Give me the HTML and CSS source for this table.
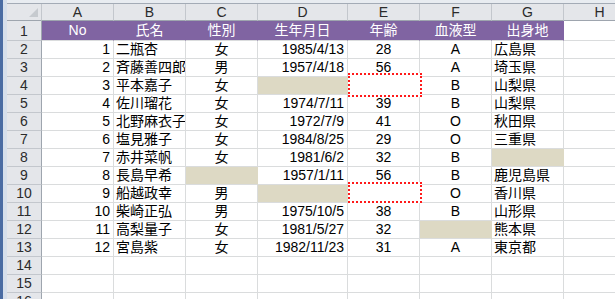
FILE: index.html
```html
<!DOCTYPE html>
<html lang="ja">
<head>
<meta charset="utf-8">
<link rel="stylesheet" href="styles.css">
</head>
<body>
<div class="window">
  <div class="side"><div class="side-dark"></div><div class="side-light"></div></div>
  <div class="main">
    <div class="topstrip"></div>
    <div class="sheet">
      <div class="grid">
        <div class="ch corner"><span class="tri"></span></div>
        <div class="ch">A</div><div class="ch">B</div><div class="ch">C</div><div class="ch">D</div><div class="ch">E</div><div class="ch">F</div><div class="ch">G</div><div class="ch">H</div>

        <div class="rh r1">1</div>
        <div class="c hd r1">No</div><div class="c hd r1">氏名</div><div class="c hd r1">性別</div><div class="c hd r1">生年月日</div><div class="c hd r1">年齢</div><div class="c hd r1">血液型</div><div class="c hd r1">出身地</div><div class="c r1"></div>

        <div class="rh">2</div>
        <div class="c num">1</div><div class="c txt">二瓶杏</div><div class="c ctr">女</div><div class="c num">1985/4/13</div><div class="c ctr">28</div><div class="c ctr">A</div><div class="c txt">広島県</div><div class="c"></div>

        <div class="rh">3</div>
        <div class="c num">2</div><div class="c txt">斉藤善四郎</div><div class="c ctr">男</div><div class="c num">1957/4/18</div><div class="c ctr">56</div><div class="c ctr">A</div><div class="c txt">埼玉県</div><div class="c"></div>

        <div class="rh">4</div>
        <div class="c num">3</div><div class="c txt">平本嘉子</div><div class="c ctr">女</div><div class="c tan"></div><div class="c ctr"></div><div class="c ctr">B</div><div class="c txt">山梨県</div><div class="c"></div>

        <div class="rh">5</div>
        <div class="c num">4</div><div class="c txt">佐川瑠花</div><div class="c ctr">女</div><div class="c num">1974/7/11</div><div class="c ctr">39</div><div class="c ctr">B</div><div class="c txt">山梨県</div><div class="c"></div>

        <div class="rh">6</div>
        <div class="c num">5</div><div class="c txt">北野麻衣子</div><div class="c ctr">女</div><div class="c num">1972/7/9</div><div class="c ctr">41</div><div class="c ctr">O</div><div class="c txt">秋田県</div><div class="c"></div>

        <div class="rh">7</div>
        <div class="c num">6</div><div class="c txt">塩見雅子</div><div class="c ctr">女</div><div class="c num">1984/8/25</div><div class="c ctr">29</div><div class="c ctr">O</div><div class="c txt">三重県</div><div class="c"></div>

        <div class="rh">8</div>
        <div class="c num">7</div><div class="c txt">赤井菜帆</div><div class="c ctr">女</div><div class="c num">1981/6/2</div><div class="c ctr">32</div><div class="c ctr">B</div><div class="c tan"></div><div class="c"></div>

        <div class="rh">9</div>
        <div class="c num">8</div><div class="c txt">長島早希</div><div class="c tan"></div><div class="c num">1957/1/11</div><div class="c ctr">56</div><div class="c ctr">B</div><div class="c txt">鹿児島県</div><div class="c"></div>

        <div class="rh">10</div>
        <div class="c num">9</div><div class="c txt">船越政幸</div><div class="c ctr">男</div><div class="c tan"></div><div class="c ctr"></div><div class="c ctr">O</div><div class="c txt">香川県</div><div class="c"></div>

        <div class="rh">11</div>
        <div class="c num">10</div><div class="c txt">柴崎正弘</div><div class="c ctr">男</div><div class="c num">1975/10/5</div><div class="c ctr">38</div><div class="c ctr">B</div><div class="c txt">山形県</div><div class="c"></div>

        <div class="rh">12</div>
        <div class="c num">11</div><div class="c txt">高梨量子</div><div class="c ctr">女</div><div class="c num">1981/5/27</div><div class="c ctr">32</div><div class="c tan"></div><div class="c txt">熊本県</div><div class="c"></div>

        <div class="rh">13</div>
        <div class="c num">12</div><div class="c txt">宮島紫</div><div class="c ctr">女</div><div class="c num">1982/11/23</div><div class="c ctr">31</div><div class="c ctr">A</div><div class="c txt">東京都</div><div class="c"></div>

        <div class="rh">14</div>
        <div class="c"></div><div class="c"></div><div class="c"></div><div class="c"></div><div class="c"></div><div class="c"></div><div class="c"></div><div class="c"></div>

        <div class="rh">15</div>
        <div class="c"></div><div class="c"></div><div class="c"></div><div class="c"></div><div class="c"></div><div class="c"></div><div class="c"></div><div class="c"></div>

        <div class="rh">16</div>
        <div class="c"></div><div class="c"></div><div class="c"></div><div class="c"></div><div class="c"></div><div class="c"></div><div class="c"></div><div class="c"></div>
      </div>
      <div class="mark mark-e4"></div>
      <div class="mark mark-e10"></div>
    </div>
  </div>
</div>
</body>
</html>
```

FILE: styles.css
```css
html, body {
  margin: 0;
  padding: 0;
  background: #ffffff;
}

.window {
  width: 615px;
  height: 299px;
  overflow: hidden;
  display: flex;
  font-family: "Liberation Sans", "Noto Sans CJK JP", sans-serif;
  font-size: 14px;
  color: #000;
}

.side {
  display: flex;
  flex: 0 0 7px;
}
.side-dark {
  width: 3px;
  background: #4a6ca3;
}
.side-light {
  width: 4px;
  background: #d6dfeb;
}

.main {
  flex: 1;
  display: flex;
  flex-direction: column;
  min-width: 0;
}

.topstrip {
  height: 3px;
  flex: 0 0 3px;
  background: #e8ecf1;
  border-bottom: 1px solid #a3abb6;
}

.sheet {
  position: relative;
  flex: 1;
}

.grid {
  display: grid;
  grid-template-columns: 35px 72px 72px 72px 90px 72px 72px 72px 72px;
  grid-template-rows: 17px 20px repeat(15, 18px);
}

.grid > div {
  box-sizing: border-box;
  border-right: 1px solid #dadcdd;
  border-bottom: 1px solid #dadcdd;
  overflow: hidden;
  white-space: nowrap;
}

.ch {
  background: #e4e6ea;
  border-right-color: #c3c7cd !important;
  border-bottom-color: #9ea5ae !important;
  color: #2b2b2b;
  display: flex;
  align-items: center;
  justify-content: center;
  font-size: 14px;
  line-height: 16px;
}

.corner {
  position: relative;
}
.tri {
  position: absolute;
  right: 3px;
  bottom: 3px;
  width: 0;
  height: 0;
  border-left: 9px solid transparent;
  border-bottom: 9px solid #c6cacf;
}

.rh {
  background: #e4e6ea;
  border-right-color: #9ea5ae !important;
  border-bottom-color: #c3c7cd !important;
  color: #2b2b2b;
  display: flex;
  align-items: flex-end;
  justify-content: center;
  line-height: 16px;
  padding-bottom: 1px;
}

.c {
  display: flex;
  align-items: flex-end;
  line-height: 16px;
  padding: 0 3px 1px 3px;
}

.num { justify-content: flex-end; }
.ctr { justify-content: center; }
.txt { justify-content: flex-start; padding-left: 2px; }

.hd {
  background: #8064a2;
  color: #ffffff;
  justify-content: center;
  border-right-color: #8064a2 !important;
  padding-bottom: 2px;
}

.tan {
  background: #ddd9c4;
  border-right-color: #ddd9c4 !important;
}

.mark {
  position: absolute;
  box-sizing: border-box;
  background: #ffffff;
  border: 2px dotted #ff1a1a;
}
.mark-e4 {
  left: 341px;
  top: 69px;
  width: 74px;
  height: 24px;
}
.mark-e10 {
  left: 341px;
  top: 178px;
  width: 74px;
  height: 21px;
}
```
